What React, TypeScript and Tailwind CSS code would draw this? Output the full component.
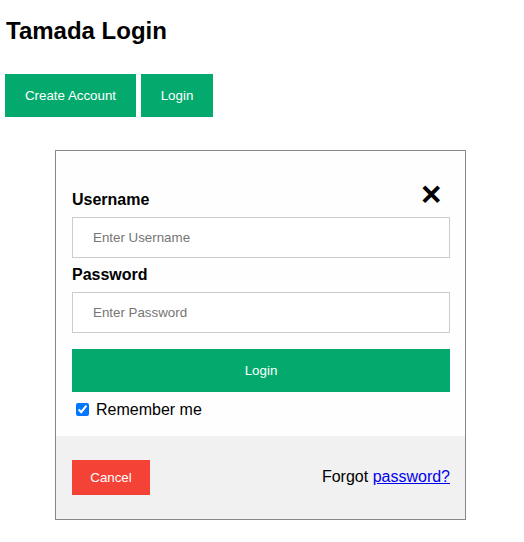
import React from "react";

export default function App() {
  return (
    <div className="min-h-screen bg-white font-['Liberation_Sans',Arial,sans-serif] text-black">
      <div className="pl-[5px] pt-[17px]">
        <h2 className="pl-[1px] text-[24px] font-bold leading-[28px]">Tamada Login</h2>
        <div className="mt-[29px] flex gap-[5px]">
          <button className="h-[43px] w-[131px] bg-[#04AA6D] text-[13.33px] leading-[15px] text-white">
            Create Account
          </button>
          <button className="h-[43px] w-[72px] bg-[#04AA6D] text-[13.33px] leading-[15px] text-white">
            Login
          </button>
        </div>
      </div>

      <div className="relative ml-[55px] mt-[33px] w-[411px] border border-[#888] bg-[#fefefe]">
        <span className="absolute left-[365px] top-[25px] text-[35px] font-bold leading-[35px] text-black">
          ×
        </span>
        <div className="pl-[16px] pr-[15px] pt-[40px] pb-[17px]">
          <label className="block text-[16px] font-bold leading-[18px]">Username</label>
          <input
            type="text"
            placeholder="Enter Username"
            className="mt-[8px] block h-[41px] w-full border border-[#ccc] bg-white px-[20px] text-[13.33px] outline-none placeholder:text-[#757575]"
          />
          <label className="mt-[8px] block text-[16px] font-bold leading-[18px]">Password</label>
          <input
            type="password"
            placeholder="Enter Password"
            className="mt-[8px] block h-[41px] w-full border border-[#ccc] bg-white px-[20px] text-[13.33px] outline-none placeholder:text-[#757575]"
          />
          <button className="mt-[16px] block h-[43px] w-full bg-[#04AA6D] text-[13.33px] leading-[15px] text-white">
            Login
          </button>
          <div className="mt-[9px] flex h-[18px] items-start">
            <input type="checkbox" defaultChecked className="ml-[4px] mt-[2px] h-[13px] w-[13px]" />
            <span className="ml-[7px] text-[16px] leading-[18px]">Remember me</span>
          </div>
        </div>
        <div className="flex items-center justify-between bg-[#f1f1f1] pl-[16px] pr-[15px] py-[24px]">
          <button className="h-[35px] w-[78px] bg-[#f44336] text-[13.33px] leading-[15px] text-white">
            Cancel
          </button>
          <span className="-mt-[1px] text-[16px] leading-[18px]">
            Forgot{" "}
            <a href="#" className="text-[#0000ee] underline">
              password?
            </a>
          </span>
        </div>
      </div>
    </div>
  );
}
